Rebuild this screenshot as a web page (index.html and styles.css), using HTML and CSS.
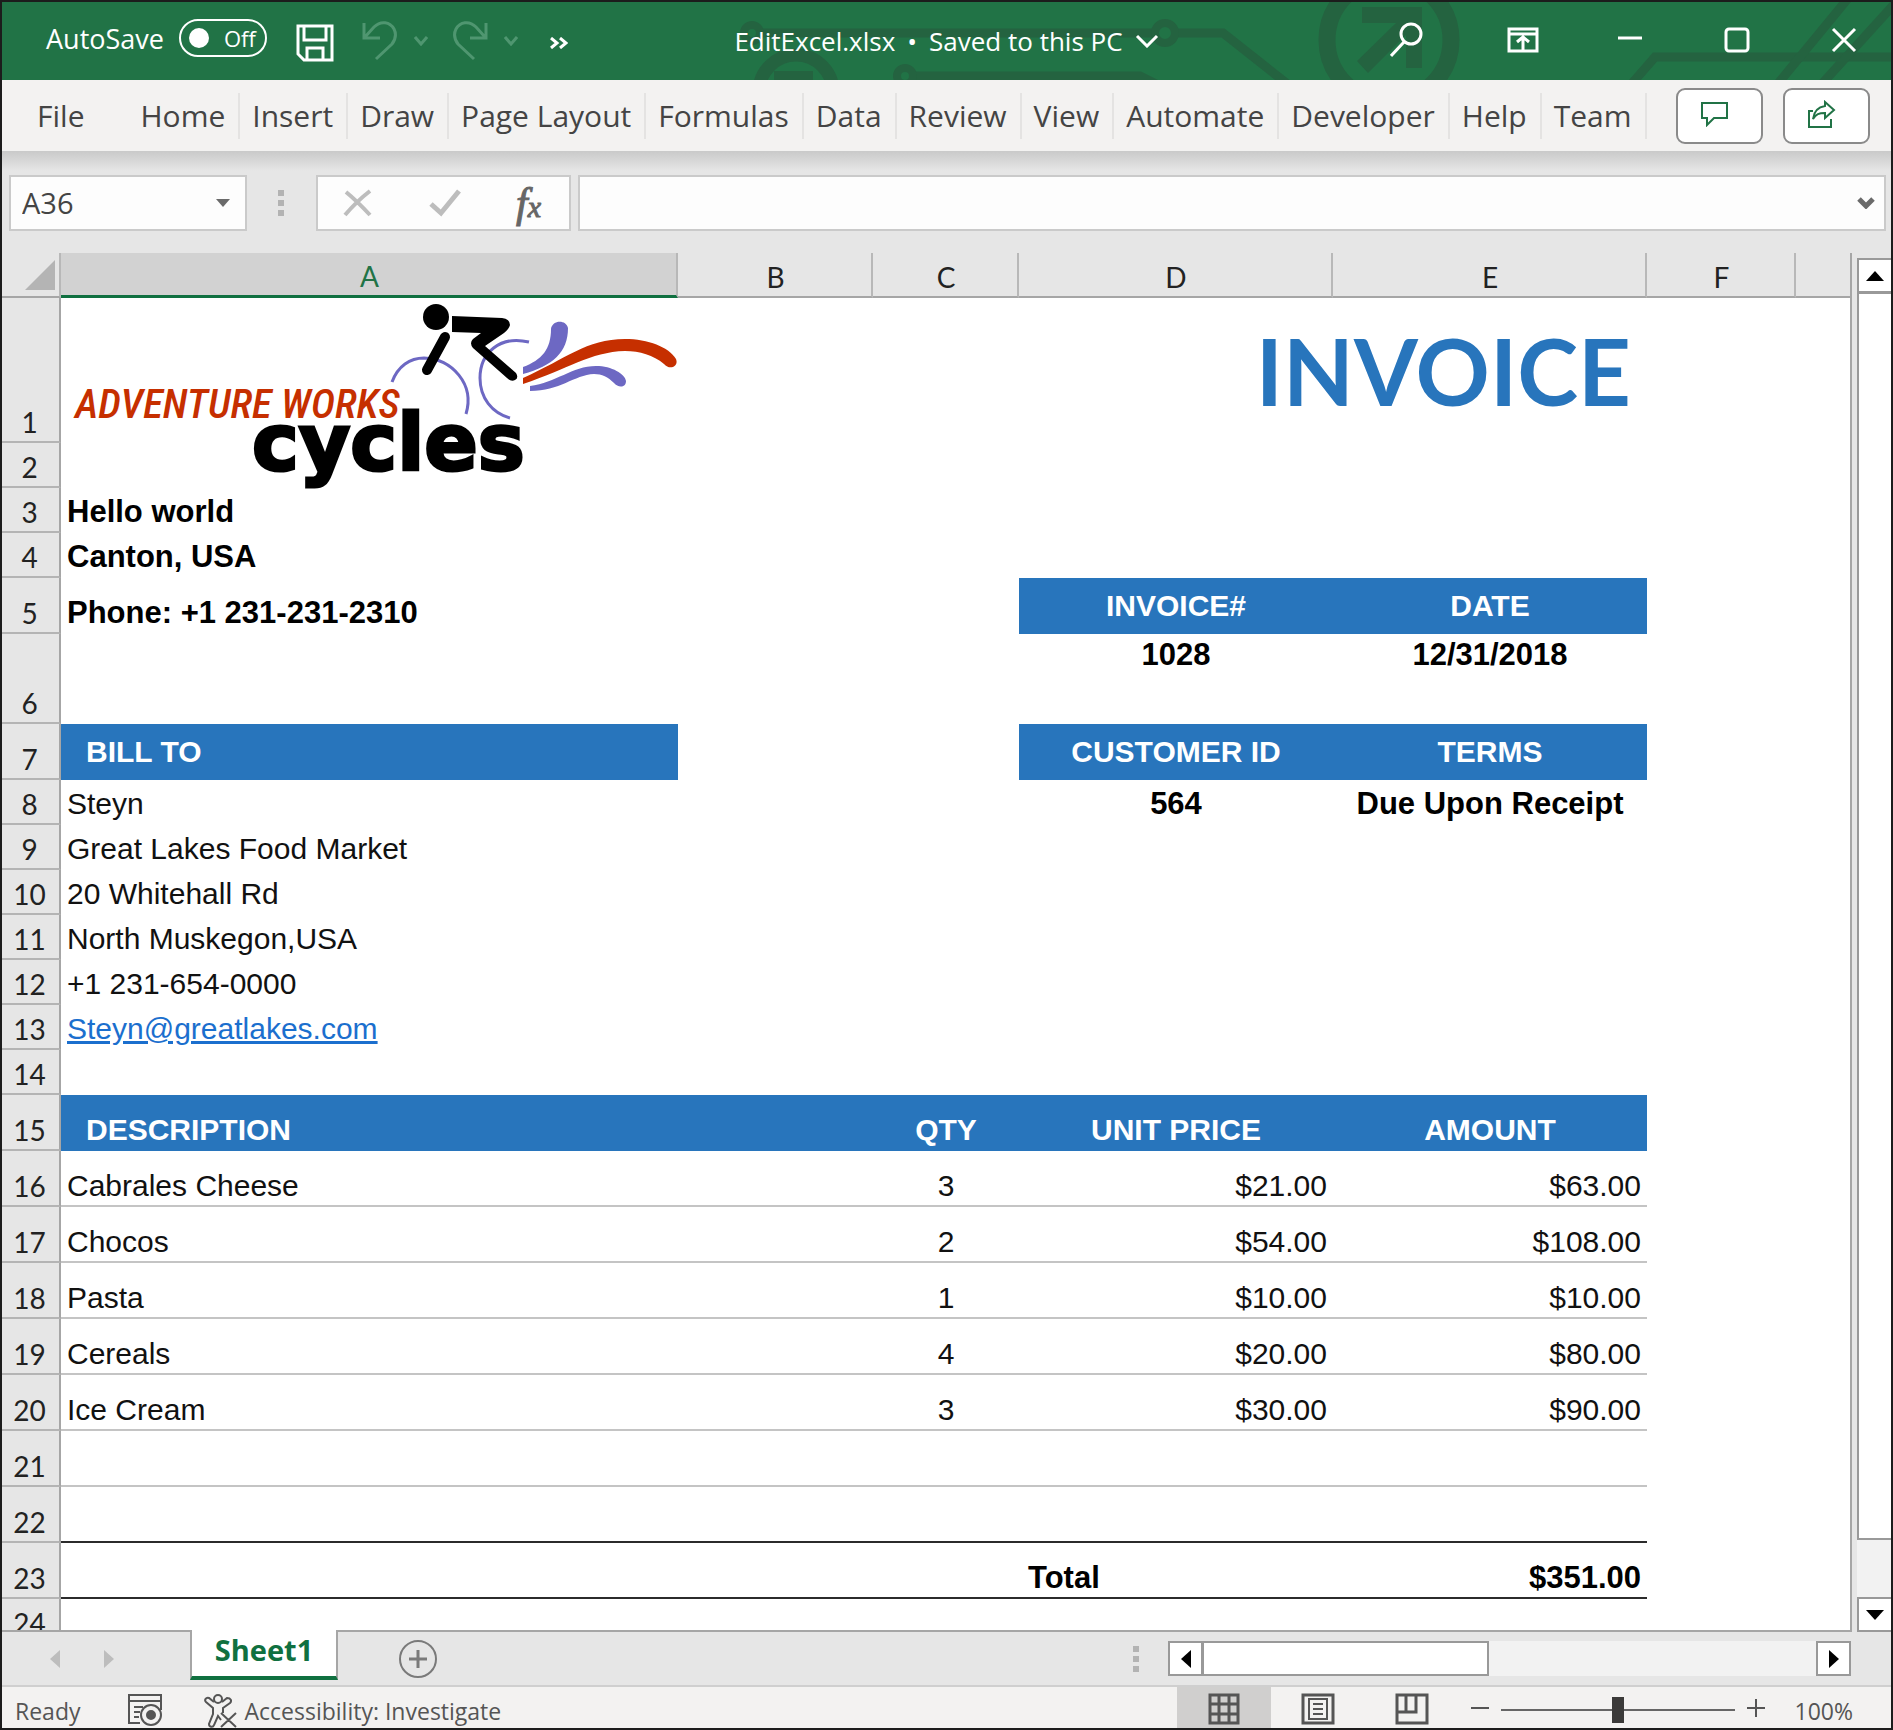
FILE: index.html
```html
<!DOCTYPE html>
<html lang="en">
<head>
<meta charset="utf-8">
<title>EditExcel.xlsx</title>
<link rel="stylesheet" href="styles.css">
</head>
<body>
<div class="window">
  <header class="titlebar">
    <svg class="circuit" width="1889" height="78" viewBox="2 2 1889 78" fill="none" stroke="#246340" aria-hidden="true">
      <g stroke-width="9">
        <path d="M752 33H1223L1290 86M905 76H1140L1160 86M1628 88L1655 57H1891"/>
        <path d="M1850 -4L1776 86M1898 0L1820 86"/>
      </g>
      <g fill="#217346" stroke-width="8"><circle cx="752" cy="33" r="8"/><circle cx="1165" cy="33" r="10"/><circle cx="905" cy="76" r="8"/></g>
      <circle cx="796" cy="92" r="37" stroke-width="13"/>
      <circle cx="1389" cy="40" r="62" stroke-width="17"/>
      <path fill="#246340" stroke="none" d="M774 71H813V80H774ZM1362 7H1422V68H1406V35L1368 73L1357 61L1396 23H1362Z"/>
    </svg>
    <div class="quick">
      <label class="autosave">AutoSave
        <input type="checkbox" class="sr">
        <span class="toggle"><span class="knob"></span>Off</span>
      </label>
      <button class="bare save" aria-label="Save"><svg width="38" height="38" viewBox="0 0 38 38" fill="none" stroke="#fff" stroke-width="3"><path d="M2 2H36V36H8L2 30Z"/><path d="M8 2V16H30V2M11 36V24H27V36"/></svg></button>
      <button class="bare dim undo" aria-label="Undo"><svg width="36" height="40" viewBox="0 0 36 40" fill="none" stroke="#4f9670" stroke-width="3"><path d="M2 2V17H18M3 16L12 6C19 -1 28 1 32 8C35 14 33 19 30 23L14 38"/></svg></button>
      <button class="bare more" aria-label="Undo list"><svg width="14" height="10" viewBox="0 0 14 10" fill="none" stroke="#4f9670" stroke-width="3"><path d="M1 1L7 8L13 1"/></svg></button>
      <button class="bare dim" aria-label="Redo"><svg width="36" height="40" viewBox="0 0 36 40" fill="none" stroke="#4f9670" stroke-width="3"><path d="M34 2V17H18M33 16L24 6C17 -1 8 1 4 8C1 14 3 19 6 23L22 38"/></svg></button>
      <button class="bare more" aria-label="Redo list"><svg width="14" height="10" viewBox="0 0 14 10" fill="none" stroke="#4f9670" stroke-width="3"><path d="M1 1L7 8L13 1"/></svg></button>
      <button class="bare customize" aria-label="More commands"><svg width="18" height="12" viewBox="0 0 18 12" fill="none" stroke="#fff" stroke-width="3"><path d="M1 1L7 6L1 11M10 1L16 6L10 11"/></svg></button>
    </div>
    <button class="bare filename"><span>EditExcel.xlsx</span><span>•</span><span>Saved to this PC</span><svg width="24" height="14" viewBox="0 0 24 14" fill="none" stroke="#fff" stroke-width="3"><path d="M2 2L12 12L22 2"/></svg></button>
    <div class="controls">
      <button class="bare search" aria-label="Search"><svg width="34" height="36" viewBox="0 0 34 36" fill="none" stroke="#fff" stroke-width="3"><circle cx="21" cy="12" r="10"/><path d="M14 20L1 34"/></svg></button>
      <button class="bare" aria-label="Ribbon display options"><svg width="32" height="26" viewBox="0 0 32 26" fill="none" stroke="#fff" stroke-width="3"><path d="M2 2H30V24H2ZM2 7H30M16 24V11M10 15L16 10L22 15"/></svg></button>
      <button class="bare" aria-label="Minimize"><svg width="24" height="26" viewBox="0 0 24 26" stroke="#fff" stroke-width="3"><path d="M0 11H24"/></svg></button>
      <button class="bare" aria-label="Maximize"><svg width="26" height="26" viewBox="0 0 26 26" fill="none" stroke="#fff" stroke-width="3"><rect x="2" y="2" width="22" height="22" rx="3"/></svg></button>
      <button class="bare" aria-label="Close"><svg width="26" height="26" viewBox="0 0 26 26" stroke="#fff" stroke-width="3"><path d="M2 2L24 24M24 2L2 24"/></svg></button>
    </div>
  </header>

  <nav class="ribbon">
    <a href="#" class="file">File</a>
    <div class="tabs">
      <a href="#">Home</a><a href="#">Insert</a><a href="#">Draw</a><a href="#">Page Layout</a><a href="#">Formulas</a><a href="#">Data</a><a href="#">Review</a><a href="#">View</a><a href="#">Automate</a><a href="#">Developer</a><a href="#">Help</a><a href="#">Team</a>
    </div>
    <button class="pill" aria-label="Comments"><svg width="28" height="26" viewBox="0 0 28 26" fill="none" stroke="#217346" stroke-width="2"><path d="M1 2H26V17H13L6 24V17H1Z"/></svg></button>
    <button class="pill" aria-label="Share"><svg width="28" height="28" viewBox="2 0 28 28" fill="none" stroke="#217346" stroke-width="2"><path d="M7 11H3V27H25V19"/><path d="M19 2L28 10L19 18V13C13 13 10 14 7 19C8 11 12 7 19 6Z"/></svg></button>
  </nav>

  <div class="formula">
    <div class="box namebox"><input type="text" value="A36" aria-label="Name box"><button class="bare" aria-label="Names"><svg width="14" height="8" viewBox="0 0 14 8" fill="#6a6a6a"><path d="M0 0H14L7 8Z"/></svg></button></div>
    <span class="dots"><i></i><i></i><i></i></span>
    <div class="box fx">
      <button class="bare" aria-label="Cancel"><svg width="30" height="28" viewBox="0 0 30 28" stroke="#bdbdbd" stroke-width="4"><path d="M3 3Q14 12 27 26M27 2Q14 12 2 26"/></svg></button>
      <button class="bare" aria-label="Enter"><svg width="32" height="28" viewBox="0 0 32 28" fill="none" stroke="#bdbdbd" stroke-width="5"><path d="M2 15L12 24L30 2"/></svg></button>
      <button class="bare fxname" aria-label="Insert function"><span class="f">f</span><span class="x">x</span></button>
    </div>
    <div class="box entry"><input type="text" aria-label="Formula"><button class="bare" aria-label="Expand"><svg width="18" height="12" viewBox="0 0 18 12" fill="none" stroke="#6a6a6a" stroke-width="5"><path d="M2 2L9 9L16 2"/></svg></button></div>
  </div>

  <main class="work">
    <div class="sheet">
      <table>
        <colgroup><col class="c-num"><col class="c-a"><col class="c-b"><col class="c-c"><col class="c-d"><col class="c-d"><col class="c-f"><col></colgroup>
        <thead><tr><th class="corner"><svg width="30" height="30" viewBox="0 0 30 30" fill="#b4b4b4" aria-hidden="true"><path d="M30 0V30H0Z"/></svg></th><th class="active">A</th><th>B</th><th>C</th><th>D</th><th>E</th><th>F</th><th class="last"></th></tr></thead>
        <tbody>
        <tr class="h-title"><th>1</th><td class="logo-cell">
          <svg class="logo" width="617" height="192" viewBox="61 298 617 192" role="img" aria-label="Adventure Works Cycles">
            <g fill="none" stroke="#6d68c3" stroke-width="3"><path d="M392 382C398 366 410 358 424 358C452 359 475 384 466 414"/><path d="M529 342C500 335 480 353 480 378C480 398 492 413 510 418"/></g>
            <ellipse cx="436" cy="317" rx="13" ry="13"/>
            <path d="M445 337L427 370" stroke="#000" stroke-width="10" stroke-linecap="round"/>
            <path d="M452 316L502 318Q510 319 510 325Q509 329 504 333L485 346L516 373Q519 378 515 380Q511 382 507 378L473 348Q469 343 473 339L481 333L452 332Z"/>
            <path fill="#6d68c3" d="M523 367C542 360 551 349 551 329C552 320 566 319 568 328C568 352 553 366 523 374Z"/>
            <path fill="#c62f00" d="M523 378C566 359 586 339 625 339C648 339 669 347 676 359C679 366 670 371 664 364C653 355 640 351 625 351C590 352 568 369 523 384Z"/>
            <path fill="#6d68c3" d="M530 386C556 383 572 366 596 366C612 366 625 374 626 381C626 388 618 388 614 383C608 377 602 374 594 374C574 375 560 391 530 391Z"/>
            <text x="75" y="418" class="logo-top">ADVENTURE WORKS</text>
            <text x="252" y="470" class="logo-main">cycles</text>
          </svg></td><td></td><td></td><td colspan="2" class="invoice">INVOICE</td><td></td><td></td></tr>
        <tr><th>2</th><td colspan="7"></td></tr>
        <tr><th>3</th><td class="b">Hello world</td><td colspan="6"></td></tr>
        <tr><th>4</th><td class="b">Canton, USA</td><td colspan="6"></td></tr>
        <tr class="h-band"><th>5</th><td class="b">Phone: +1 231-231-2310</td><td></td><td></td><td class="band">INVOICE#</td><td class="band">DATE</td><td colspan="2"></td></tr>
        <tr class="h-gap"><th>6</th><td></td><td></td><td></td><td class="b top">1028</td><td class="b top">12/31/2018</td><td colspan="2"></td></tr>
        <tr class="h-band"><th>7</th><td class="band left">BILL TO</td><td></td><td></td><td class="band">CUSTOMER ID</td><td class="band">TERMS</td><td colspan="2"></td></tr>
        <tr><th>8</th><td>Steyn</td><td></td><td></td><td class="b mid">564</td><td class="b mid">Due Upon Receipt</td><td colspan="2"></td></tr>
        <tr><th>9</th><td>Great Lakes Food Market</td><td colspan="6"></td></tr>
        <tr><th>10</th><td>20 Whitehall Rd</td><td colspan="6"></td></tr>
        <tr><th>11</th><td>North Muskegon,USA</td><td colspan="6"></td></tr>
        <tr><th>12</th><td>+1 231-654-0000</td><td colspan="6"></td></tr>
        <tr><th>13</th><td><a href="mailto:Steyn@greatlakes.com">Steyn@greatlakes.com</a></td><td colspan="6"></td></tr>
        <tr><th>14</th><td colspan="7"></td></tr>
        <tr class="h-band heads"><th>15</th><td class="band left">DESCRIPTION</td><td class="band"></td><td class="band">QTY</td><td class="band">UNIT PRICE</td><td class="band">AMOUNT</td><td colspan="2"></td></tr>
        <tr class="h-band item"><th>16</th><td>Cabrales Cheese</td><td></td><td class="mid">3</td><td class="num">$21.00</td><td class="num">$63.00</td><td colspan="2"></td></tr>
        <tr class="h-band item"><th>17</th><td>Chocos</td><td></td><td class="mid">2</td><td class="num">$54.00</td><td class="num">$108.00</td><td colspan="2"></td></tr>
        <tr class="h-band item"><th>18</th><td>Pasta</td><td></td><td class="mid">1</td><td class="num">$10.00</td><td class="num">$10.00</td><td colspan="2"></td></tr>
        <tr class="h-band item"><th>19</th><td>Cereals</td><td></td><td class="mid">4</td><td class="num">$20.00</td><td class="num">$80.00</td><td colspan="2"></td></tr>
        <tr class="h-band item"><th>20</th><td>Ice Cream</td><td></td><td class="mid">3</td><td class="num">$30.00</td><td class="num">$90.00</td><td colspan="2"></td></tr>
        <tr class="h-band item"><th>21</th><td></td><td></td><td></td><td></td><td></td><td colspan="2"></td></tr>
        <tr class="h-band item dark"><th>22</th><td></td><td></td><td></td><td></td><td></td><td colspan="2"></td></tr>
        <tr class="h-band item dark"><th>23</th><td></td><td></td><td></td><td class="b total">Total</td><td class="b num">$351.00</td><td colspan="2"></td></tr>
        <tr><th>24</th><td colspan="7"></td></tr>
        </tbody>
      </table>
    </div>
    <div class="vscroll">
      <button class="sbtn" aria-label="Scroll up"><svg width="18" height="10" viewBox="0 0 18 10"><path d="M9 0L18 10H0Z"/></svg></button>
      <div class="vthumb"></div><div class="vtrack"></div>
      <button class="sbtn" aria-label="Scroll down"><svg width="18" height="10" viewBox="0 0 18 10"><path d="M0 0H18L9 10Z"/></svg></button>
    </div>
  </main>

  <div class="sheetbar">
    <button class="bare prev" aria-label="Previous sheet"><svg width="10" height="18" viewBox="0 0 10 18" fill="#bdbdbd"><path d="M10 0V18L0 9Z"/></svg></button>
    <button class="bare next" aria-label="Next sheet"><svg width="10" height="18" viewBox="0 0 10 18" fill="#bdbdbd"><path d="M0 0V18L10 9Z"/></svg></button>
    <button class="sheettab">Sheet1</button>
    <button class="bare add" aria-label="New sheet"><svg width="38" height="38" viewBox="0 0 38 38" fill="none" stroke="#7a7a7a" stroke-width="2"><circle cx="19" cy="19" r="18"/><path stroke-width="3" d="M10 19H28M19 10V28"/></svg></button>
    <span class="dots"><i></i><i></i><i></i></span>
    <div class="hscroll">
      <button class="sbtn" aria-label="Scroll left"><svg width="10" height="18" viewBox="0 0 10 18"><path d="M10 0V18L0 9Z"/></svg></button>
      <div class="hthumb"></div>
      <button class="sbtn" aria-label="Scroll right"><svg width="10" height="18" viewBox="0 0 10 18"><path d="M0 0V18L10 9Z"/></svg></button>
    </div>
  </div>

  <footer class="status">
    <span class="ready">Ready</span>
    <button class="bare macro" aria-label="Record macro"><svg width="34" height="32" viewBox="0 0 34 32" fill="none" stroke="#555" stroke-width="2"><path d="M12 29H1V1H33V16M1 7H33M6 13H15M6 18H12M6 23H11"/><circle cx="23" cy="21" r="10"/><circle cx="23" cy="21" r="4" fill="#555"/></svg></button>
    <button class="bare access"><svg width="34" height="34" viewBox="0 0 34 34" fill="none" stroke="#555" stroke-width="2"><circle cx="15" cy="5" r="4"/><path d="M11 8L6 4C3 3 1 6 3 8L10 14V20L6 30C6 33 10 34 11 31L15 22L18 26M19 8L24 4C28 4 29 7 27 9L20 14V19M18 19L33 33M33 19L18 33"/></svg>Accessibility: Investigate</button>
    <div class="views">
      <button class="bare on" aria-label="Normal view"><svg width="32" height="32" viewBox="0 0 32 32" fill="none" stroke="#555" stroke-width="3"><path d="M2 2H30V30H2ZM11 2V30M21 2V30M2 11H30M2 21H30"/></svg></button>
      <button class="bare" aria-label="Page layout view"><svg width="34" height="32" viewBox="0 0 34 32" fill="none" stroke="#555" stroke-width="3"><path d="M2 2H32V30H2Z"/><path stroke-width="2" d="M8 6H26V26H8ZM12 11H22M12 16H22M12 21H22"/></svg></button>
      <button class="bare" aria-label="Page break view"><svg width="34" height="32" viewBox="0 0 34 32" fill="none" stroke="#555" stroke-width="3"><path d="M2 2H32V30H2ZM2 19H21V2M11 2V19"/></svg></button>
    </div>
    <button class="bare step" aria-label="Zoom out"><svg width="18" height="18" viewBox="0 0 18 18" stroke="#555" stroke-width="2"><path d="M0 9H18"/></svg></button>
    <input type="range" min="0" max="100" value="50" aria-label="Zoom">
    <button class="bare step" aria-label="Zoom in"><svg width="18" height="18" viewBox="0 0 18 18" stroke="#555" stroke-width="2"><path d="M0 9H18M9 0V18"/></svg></button>
    <span class="percent">100%</span>
  </footer>
</div>
</body>
</html>
```

FILE: styles.css
```css
* { box-sizing: border-box; }
body { margin: 0; font-family: "Open Sans", "Noto Sans", sans-serif; color: #444; }
button, input { font: inherit; color: inherit; }
svg { display: block; flex: none; }
a { color: inherit; text-decoration: none; }

.window { display: flex; flex-direction: column; height: 100vh; border: 2px solid #1c1c1c; background: #e6e6e6; overflow: hidden; }
.bare { display: flex; align-items: center; justify-content: center; border: 0; padding: 0; background: none; }
.sr { position: absolute; opacity: 0; width: 1px; height: 1px; }

/* Title bar */
.titlebar { position: relative; display: grid; grid-template-columns: 1fr auto 1fr; align-items: center; flex: none; height: 78px; background: #217346; color: #fff; font-size: 26px; overflow: hidden; }
.circuit { position: absolute; top: 0; right: 0; }
.quick, .filename, .controls { position: relative; display: flex; align-items: center; }
.quick { padding-left: 44px; }
.autosave { display: flex; align-items: center; gap: 15px; height: 74px; padding-bottom: 6px; font-size: 27px; }
.toggle { display: flex; align-items: center; gap: 15px; width: 88px; height: 38px; padding-left: 8px; border: 2px solid #fff; border-radius: 19px; font-size: 22px; }
.knob { width: 20px; height: 20px; border-radius: 50%; background: #fff; }
.save { margin: 4px 28px 0 29px; }
.more { margin: 0 24px 0 16px; }
.customize { margin: 4px 0 0 8px; }
.filename { gap: 12px; }
.controls { justify-content: flex-end; padding-bottom: 2px; }
.controls button { width: 94px; height: 74px; margin-left: 13px; }
.controls .search { margin-right: 9px; }

/* Ribbon */
.ribbon { display: flex; align-items: center; flex: none; height: 71px; padding-right: 21px; background: #f3f2f1; font-size: 30px; line-height: 46px; white-space: nowrap; }
.file { padding: 0 44px 0 35px; }
.tabs { display: flex; flex: 1; }
.tabs a { padding: 0 13px 0 12px; border-right: 2px solid #e4e3e2; }
.pill { display: flex; align-items: center; width: 87px; height: 56px; margin-left: 20px; padding: 0 0 3px 23px; border: 2px solid #8a8a8a; border-radius: 9px; background: #fff; }

/* Formula bar */
.formula { display: flex; align-items: center; flex: none; height: 102px; padding: 1px 5px 0 7px; background: linear-gradient(#c9c9c9, #e6e6e6 20px); }
.box { display: flex; align-items: center; height: 56px; border: 2px solid #cacaca; background: #fdfdfd; }
.box input { flex: 1; min-width: 0; border: 0; padding: 0 0 0 11px; background: none; outline: 0; }
.namebox { width: 238px; padding-right: 15px; font-size: 29px; }
.dots { display: flex; flex-direction: column; gap: 4px; }
.dots i { width: 6px; height: 6px; background: #b3b3b3; }
.formula .dots { padding: 0 32px 0 31px; }
.fx { width: 255px; justify-content: space-between; padding: 0 28px 0 25px; }
.fxname { color: #666; font-family: "Liberation Serif", serif; font-style: italic; -webkit-text-stroke: 1px #666; }
.fxname .f { font-size: 42px; line-height: 44px; }
.fxname .x { padding-top: 8px; font-size: 30px; }
.entry { flex: 1; margin-left: 7px; padding-right: 9px; font-size: 29px; }

/* Worksheet */
.work { display: flex; flex: 1; min-height: 0; }
.sheet { flex: 1; min-width: 0; overflow: hidden; border-right: 2px solid #a6a6a6; border-bottom: 2px solid #a6a6a6; background: #fff; }
table { width: 100%; table-layout: fixed; border-collapse: separate; border-spacing: 0; }
.c-num { width: 59px; }
.c-a { width: 617px; }
.c-b { width: 195px; }
.c-c { width: 146px; }
.c-d { width: 314px; }
.c-f { width: 149px; }
th { padding: 0; border-right: 2px solid #a6a6a6; border-bottom: 2px solid #b4b4b4; background: #e6e6e6; color: #222; font: 28px/36px Lato, "Open Sans", sans-serif; vertical-align: bottom; }
thead th { height: 45px; border-bottom-color: #a6a6a6; border-right-color: #b8b8b8; padding: 0 0 1px 2px; }
thead .active { border-bottom: 3px solid #107040; background: #d2d2d2; color: #217346; }
thead .last { border-right: 0; }
.corner svg { margin: 0 4px 5px auto; }
tbody tr { height: 45px; }
tbody tr.h-title { height: 145px; }
tbody tr.h-band { height: 56px; }
tbody tr.h-gap { height: 90px; }
tbody th { padding: 0 2px 1px 0; }
td { padding: 3px 6px; color: #111; font: 30px/36px "Liberation Sans", sans-serif; vertical-align: bottom; white-space: nowrap; }
.b { color: #000; font-size: 31px; font-weight: bold; }
.top { text-align: center; vertical-align: top; }
.mid { text-align: center; }
.num { text-align: right; }
.total { padding-left: 9px; }
.band { background: #2875bc; color: #fff; font-weight: bold; text-align: center; vertical-align: middle; }
.heads .band { vertical-align: bottom; }
.left { padding-left: 25px; text-align: left; }
td a { color: #1b6fce; text-decoration: underline; }
.item td { border-bottom: 2px solid #c4c4c4; padding-bottom: 1px; }
.item.dark td { border-bottom-color: #2b2b2b; }
.item td:last-child { border-bottom: 0; }
.invoice { padding: 0 16px 0 0; color: #2875bc; font: bold 92px/110px Lato, "Open Sans", sans-serif; text-align: right; vertical-align: middle; }
.logo-cell { position: relative; padding: 0; }
.logo { position: absolute; top: 0; left: 0; }
.logo-top { fill: #c62f00; font: italic 500 41px "Roboto Condensed", "Liberation Sans Narrow", "Liberation Sans", sans-serif; }
.logo-main { font: bold 79px "DejaVu Sans", sans-serif; stroke: #000; stroke-width: 3px; }

/* Scroll bars */
.sbtn { display: flex; align-items: center; justify-content: center; flex: none; width: 35px; height: 35px; padding: 0; border: 2px solid #999; background: #fff; }
.vscroll { display: flex; flex-direction: column; width: 34px; margin: 5px 0 0 5px; background: #f2f2f2; }
.vscroll .sbtn { width: 34px; border-right: 0; }
.vthumb { flex: 1; border: 2px solid #999; border-width: 1px 0 2px 2px; background: #fff; }
.vtrack { height: 57px; }

/* Sheet tabs */
.sheetbar { display: flex; align-items: center; flex: none; height: 53px; padding-right: 40px; }
.prev { width: 106px; }
.next { margin-left: -6px; width: 14px; }
.sheettab { align-self: flex-start; width: 148px; height: 50px; margin: -2px 0 0 74px; padding: 0 0 6px; border: 2px solid #a6a6a6; border-width: 0 2px 4px; border-bottom-color: #107040; background: #fff; color: #107040; font-size: 29px; font-weight: bold; line-height: 34px; }
.add { margin-left: 61px; }
.sheetbar .dots { margin: 0 29px 0 auto; }
.hscroll { display: flex; width: 683px; background: #f2f2f2; }
.hthumb { width: 286px; border: 2px solid #999; border-left-width: 1px; background: #fff; }
.hscroll .sbtn:last-child { margin-left: auto; }

/* Status bar */
.status { display: flex; align-items: center; flex: none; height: 43px; padding: 0 38px 0 13px; border-top: 2px solid #cfcfcf; background: #f3f2f1; font-size: 23px; color: #555; }
.macro { margin: 4px 41px 0 47px; }
.ready, .percent { padding-top: 6px; }
.access { gap: 8px; padding-top: 6px; }
.views { display: flex; align-self: stretch; margin-left: auto; }
.views button { width: 94px; padding-top: 2px; }
.views .on { background: #d0cfce; }
.step { margin: 0 12px; }
input[type=range] { appearance: none; width: 234px; height: 26px; margin: 4px 0 0; background: linear-gradient(#666, #666) center / 100% 2px no-repeat; }
input[type=range]::-webkit-slider-thumb { appearance: none; width: 12px; height: 26px; background: #3b3a39; }
.percent { margin-left: 18px; }
```
